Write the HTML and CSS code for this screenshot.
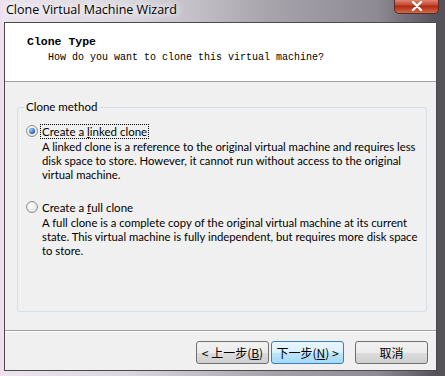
FILE: index.html
```html
<!DOCTYPE html>
<html lang="en">
  <head>
    <meta charset="utf-8">
    <title>Clone Virtual Machine Wizard</title>
    <link rel="stylesheet" href="styles.css">
  </head>
  <body>
    <div class="window">
      <div class="titlebar">
        <span class="title">Clone Virtual Machine Wizard</span>
        <div class="close">
          <svg width="14" height="10" viewBox="0 0 14 10">
            <path d="M3 1 L11 9 M11 1 L3 9" stroke="#fff" stroke-width="2.4" stroke-linecap="round"/>
          </svg>
        </div>
      </div>
      <div class="client">
        <div class="header">
          <div class="h-title">Clone Type</div>
          <div class="h-sub">How do you want to clone this virtual machine?</div>
        </div>
        <div class="body">
          <fieldset class="group">
            <legend>Clone method</legend>
            <div class="option">
              <div class="opt-row">
                <span class="radio checked"></span>
                <span class="opt-label focus">Create a <u>l</u>inked clone</span>
              </div>
              <p class="opt-desc">A linked clone is a reference to the original virtual machine and requires less<br>disk space to store. However, it cannot run without access to the original<br>virtual machine.</p>
            </div>
            <div class="option">
              <div class="opt-row">
                <span class="radio"></span>
                <span class="opt-label">Create a <u>f</u>ull clone</span>
              </div>
              <p class="opt-desc">A full clone is a complete copy of the original virtual machine at its current<br>state. This virtual machine is fully independent, but requires more disk space<br>to store.</p>
            </div>
          </fieldset>
        </div>
        <div class="footer">
          <button class="btn">&lt; 上一步(<u>B</u>)</button>
          <button class="btn default">下一步(<u>N</u>) &gt;</button>
          <button class="btn cancel">取消</button>
        </div>
      </div>
    </div>
  </body>
</html>
```

FILE: styles.css
```css
html { box-sizing : border-box }
*, *:before, *:after { box-sizing : inherit }

:root {
  --f-ui : Lato, "Open Sans", sans-serif;
  --f-sim : "Liberation Mono", "DejaVu Sans Mono", monospace;
  --f-cjk : "Noto Sans CJK SC", sans-serif;
  --c-face : #f0f0f0;
}

body {
  margin : 0;
  background : #ccc;
}

.window {
  width : 445px;
  height : 376px;
  display : flex;
  flex-direction : column;
  padding : 0 8px 5px 4px;
  background : linear-gradient(90deg, #f3dcf0 0, #ece4ee 4px, #d8d6dc 30%, #a8a4ac 60%, #8e8a94 85%, #55525a 98%);
  overflow : hidden;
}

.titlebar {
  height : 22px;
  flex : none;
  display : flex;
  align-items : flex-start;
  justify-content : space-between;
  margin-right : -2px;
}

.title {
  font-family : "Open Sans", sans-serif;
  font-size : 12.5px;
  color : #000;
  padding : 1px 0 0 2px;
  text-shadow : 0 0 6px #fff, 0 0 8px #fff;
}

.close {
  width : 45px;
  height : 16px;
  margin-top : -2px;
  border : 1px solid #5a2a24;
  border-top : none;
  border-radius : 0 0 5px 5px;
  background : linear-gradient(#e8a090, #c74a32 45%, #b02a14 55%, #d06a48);
  display : flex;
  align-items : center;
  justify-content : center;
  padding-top : 1px;
}

.client {
  flex : 1;
  display : flex;
  flex-direction : column;
  background : var(--c-face);
  border : 1px solid #4a4a4a;
}

.header {
  height : 59px;
  flex : none;
  background : #fff;
  border-bottom : 1px solid #a0a0a0;
  padding : 12px 0 0 22px;
  font-family : var(--f-sim);
  color : #000;
}

.h-title {
  font-size : 11.5px;
  font-weight : bold;
  line-height : 13px;
}

.h-sub {
  font-size : 10px;
  line-height : 13px;
  margin : 3px 0 0 21px;
}

.body {
  flex : 1;
  padding : 18px 9px 0 12px;
}

.group {
  margin : 0;
  min-width : 0;
  height : 212px;
  border : 1px solid #d5dfe5;
  border-radius : 3px;
  padding : 10px 6px 0 8px;
  font-family : var(--f-ui);
  font-size : 11.3px;
  color : #000;
  overflow : hidden;
}

.group legend {
  padding : 0 2px;
  margin-left : -2px;
  line-height : 14px;
  font-size : 11.5px;
}

.option { margin-bottom : 18px }

.opt-row {
  display : flex;
  align-items : center;
  gap : 3px;
  height : 14px;
  font-size : 11.5px;
}

.radio {
  width : 12px;
  height : 12px;
  border-radius : 50%;
  border : 1px solid #8e8f8f;
  background : radial-gradient(circle at 40% 40%, #fff, #e4e4e4 70%, #cfcfcf);
  display : flex;
  align-items : center;
  justify-content : center;
}

.radio.checked::after {
  content : "";
  width : 6px;
  height : 6px;
  border-radius : 50%;
  background : radial-gradient(circle at 35% 35%, #9ad0f8, #1c5fa8 70%);
}

.opt-label { padding : 0 1px; line-height : 13px }
.opt-label.focus { outline : 1px dotted #000 }

.opt-desc {
  margin : 2px 0 0 16px;
  line-height : 14px;
  white-space : nowrap;
}

.footer {
  height : 40px;
  flex : none;
  border-top : 1px solid #a0a0a0;
  box-shadow : inset 0 1px 0 #fff;
  display : flex;
  align-items : center;
  justify-content : flex-end;
  padding : 4px 8px 0 0;
}

.btn {
  height : 23px;
  width : 73px;
  margin : 0;
  padding : 0;
  font-family : var(--f-cjk);
  font-size : 12px;
  color : #000;
  border : 1px solid #707070;
  border-radius : 3px;
  background : linear-gradient(#f2f2f2 0, #ebebeb 50%, #dddddd 50%, #cfcfcf 100%);
}

.btn + .btn { margin-left : 2px }
.btn.cancel { margin-left : 11px }

.btn.default {
  border-color : #3c7fb1;
  background : linear-gradient(#eaf6fd 0, #d9f0fc 50%, #bee6fd 50%, #a7d9f5 100%);
}
```
